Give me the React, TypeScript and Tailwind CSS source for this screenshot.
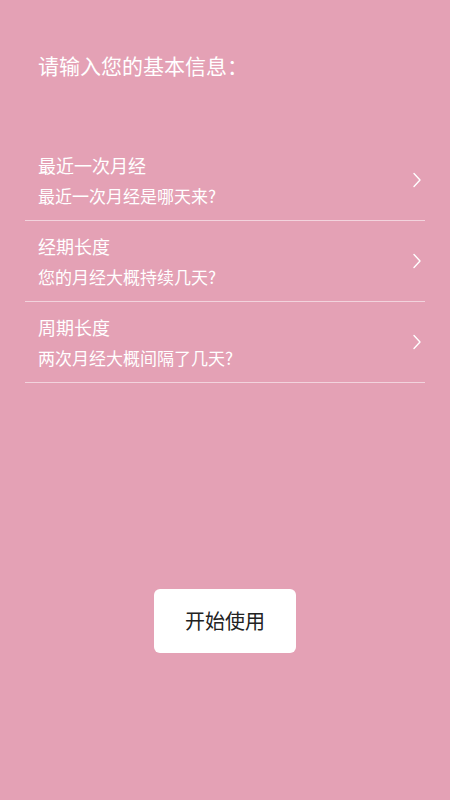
const rows = [
  {title: '最近一次月经', sub: '最近一次月经是哪天来?'},
  {title: '经期长度', sub: '您的月经大概持续几天?'},
  {title: '周期长度', sub: '两次月经大概间隔了几天?'},
]

function Chevron() {
  return (
    <svg width="10" height="16" viewBox="0 0 10 16" fill="none" className="shrink-0">
      <path d="M2 1.5 L8 8 L2 14.5" stroke="#ffffff" strokeWidth="1.4" strokeLinecap="round" strokeLinejoin="round" />
    </svg>
  )
}

export default function App() {
  return (
    <div
      className="flex h-[800px] w-[450px] flex-col bg-[#e4a1b5] text-white"
      style={{fontFamily: '"Noto Sans CJK SC", "Noto Sans", sans-serif'}}
    >
      <div className="px-[38px] pt-[50px] text-[21px] leading-[30px]">
        请输入您的基本信息：
      </div>
      <div className="mt-[60px] px-[25px]">
        {rows.map(r => (
          <div
            key={r.title}
            className="flex h-[81px] items-center justify-between border-b-[1.5px] border-[#f2d3dd] pl-[13px] pr-[3px]"
          >
            <div className="flex flex-col">
              <span className="text-[18px] leading-[26px]">{r.title}</span>
              <span className="mt-[5px] text-[17px] leading-[26px]">{r.sub}</span>
            </div>
            <Chevron />
          </div>
        ))}
      </div>
      <div className="mt-auto mb-[147px] flex justify-center">
        <button className="h-[64px] w-[142px] rounded-[6px] bg-white text-[20px] text-[#222222]">
          开始使用
        </button>
      </div>
    </div>
  )
}
